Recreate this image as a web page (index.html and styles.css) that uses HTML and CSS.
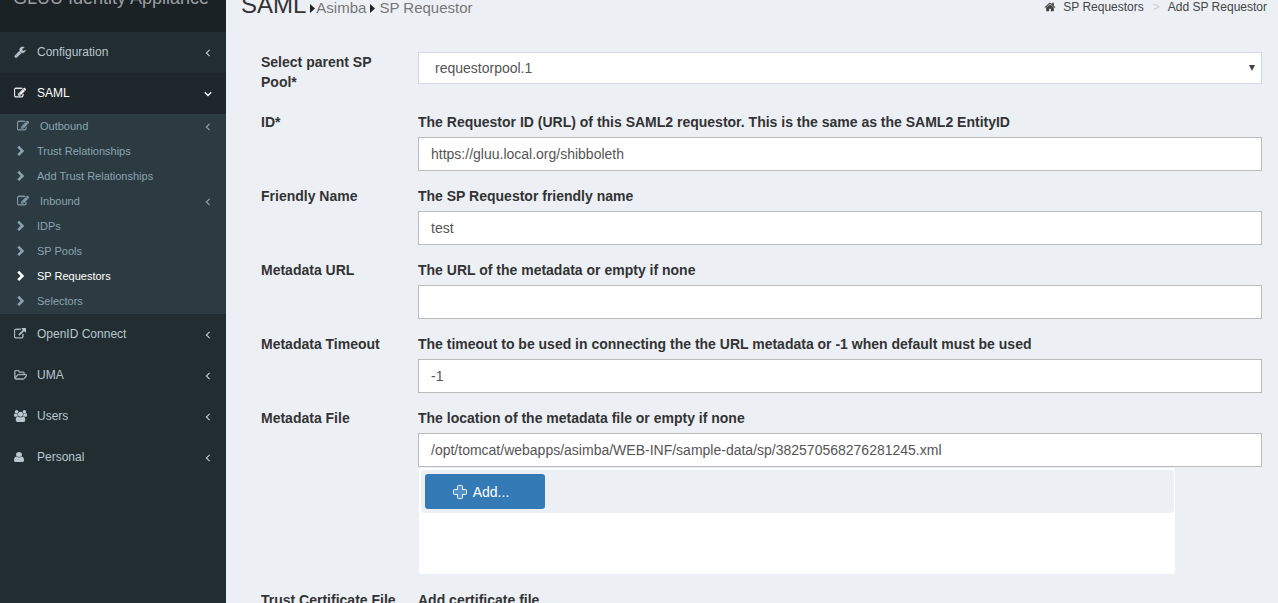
FILE: index.html
```html
<!DOCTYPE html>
<html lang="en">
<head>
<meta charset="utf-8">
<title>Add SP Requestor</title>
<link rel="stylesheet" href="styles.css">
</head>
<body>
<svg class="defs" width="0" height="0">
<symbol id="wrench" viewBox="0 0 1792 1792"><path d="M448 1472q0-26-19-45t-45-19-45 19-19 45 19 45 45 19 45-19 19-45zm644-420l-682 682q-37 37-90 37-52 0-91-37l-106-108q-38-36-38-90 0-53 38-91l681-681q39 98 114.500 173.500t173.500 114.500zm634-435q0 39-23 106-47 134-164.500 217.500t-258.500 83.500q-185 0-316.500-131.500t-131.500-316.500 131.500-316.500 316.500-131.500q58 0 121.500 16.500t107.500 46.500q16 11 16 28t-16 28l-293 169v224l193 107q5-3 79-48.500t135.500-81 70.500-35.500q15 0 23.500 10t8.500 25z"/></symbol>
<symbol id="edit" viewBox="0 0 1792 1792"><path d="M888 1184l116-116-152-152-116 116v56h96v96h56zm440-720q-16-16-33 1l-350 350q-17 17-1 33t33-1l350-350q17-17 1-33zm80 594v190q0 119-84.500 203.500t-203.500 84.500h-832q-119 0-203.500-84.500t-84.500-203.500v-832q0-119 84.500-203.500t203.500-84.500h832q63 0 117 25 15 7 18 23 3 17-9 29l-49 49q-14 14-32 8-23-6-45-6h-832q-66 0-113 47t-47 113v832q0 66 47 113t113 47h832q66 0 113-47t47-113v-126q0-13 9-22l64-64q15-15 35-7t20 29zm-96-738l288 288-672 672h-288v-288zm444 132l-92 92-288-288 92-92q28-28 68-28t68 28l152 152q28 28 28 68t-28 68z"/></symbol>
<symbol id="external" viewBox="0 0 1792 1792"><path d="M1408 928v320q0 119-84.500 203.500t-203.500 84.500h-832q-119 0-203.500-84.500t-84.500-203.500v-832q0-119 84.500-203.500t203.500-84.500h704q14 0 23 9t9 23v64q0 14-9 23t-23 9h-704q-66 0-113 47t-47 113v832q0 66 47 113t113 47h832q66 0 113-47t47-113v-320q0-14 9-23t23-9h64q14 0 23 9t9 23zm384-864v512q0 26-19 45t-45 19-45-19l-176-176-652 652q-10 10-23 10t-23-10l-114-114q-10-10-10-23t10-23l652-652-176-176q-19-19-19-45t19-45 45-19h512q26 0 45 19t19 45z"/></symbol>
<symbol id="folder" viewBox="0 128 1973 1500" preserveAspectRatio="none"><path d="M1845 931q0-35-53-35h-1088q-40 0-85.500 21.500t-71.500 52.500l-294 363q-18 24-18 40 0 35 53 35h1088q40 0 86-22t71-53l294-363q18-22 18-39zm-1141-163h768v-160q0-40-28-68t-68-28h-576q-40 0-68-28t-28-68v-64q0-40-28-68t-68-28h-320q-40 0-68 28t-28 68v853l256-315q44-53 116-87.500t140-34.500zm1269 163q0 62-46 120l-295 363q-43 53-116 87.500t-140 34.500h-1088q-92 0-158-66t-66-158v-960q0-92 66-158t158-66h320q92 0 158 66t66 158v32h544q92 0 158 66t66 158v160h192q54 0 99 24.500t67 70.500q15 32 15 68z"/></symbol>
<symbol id="users" viewBox="0 0 1920 1792" preserveAspectRatio="none"><path d="M593 896q-162 5-265 128h-134q-82 0-138-40.500t-56-118.500q0-353 124-353 6 0 43.500 21t97.500 42.500 119 21.500q67 0 133-23-5 37-5 66 0 159 81 256zm1071 637q0 120-73 189.500t-194 69.500h-874q-121 0-194-69.500t-73-189.500q0-53 3.500-103.500t14-109 26.500-108.500 43-97.500 62-81 85.500-53.500 111.500-20q10 0 43 21.500t73 48 107 48 135 21.500 135-21.500 107-48 73-48 43-21.500q61 0 111.500 20t85.500 53.500 62 81 43 97.500 26.500 108.500 14 109 3.500 103.500zm-1024-1277q0 106-75 181t-181 75-181-75-75-181 75-181 181-75 181 75 75 181zm704 384q0 159-112.500 271.500t-271.500 112.500-271.500-112.500-112.500-271.500 112.500-271.500 271.500-112.500 271.500 112.500 112.500 271.500zm576 225q0 78-56 118.500t-138 40.500h-134q-103-123-265-128 93-128 93-287 0-29-5-66 66 23 133 23 59 0 119-21.500t97.500-42.500 43.500-21q124 0 124 353zm-128-609q0 106-75 181t-181 75-181-75-75-181 75-181 181-75 181 75 75 181z"/></symbol>
<symbol id="user" viewBox="256 128 1280 1536" preserveAspectRatio="none"><path d="M1536 1399q0 109-62.500 187t-150.500 78h-854q-88 0-150.500-78t-62.500-187q0-85 8.500-160.500t31.500-152 58.500-131 94-89 134.500-34.500q131 128 313 128t313-128q76 0 134.500 34.500t94 89 58.500 131 31.500 152 8.500 160.500zm-256-887q0 159-112.500 271.500t-271.500 112.500-271.500-112.500-112.500-271.500 112.500-271.500 271.500-112.500 271.500 112.500 112.500 271.500z"/></symbol>
<symbol id="home" viewBox="0 0 1792 1792"><path d="M1472 992v480q0 26-19 45t-45 19h-384v-384h-256v384h-384q-26 0-45-19t-19-45v-480q0-1 .5-3t.5-3l575-474 575 474q1 2 1 6zm223-69l-62 74q-8 9-21 11h-3q-13 0-21-7l-692-577-692 577q-12 8-24 7-13-2-21-11l-62-74q-8-10-7-23.500t11-21.500l719-599q32-26 76-26t76 26l244 204v-195q0-14 9-23t23-9h192q14 0 23 9t9 23v408l219 182q10 8 11 21.500t-7 23.500z"/></symbol>
<symbol id="right" viewBox="0 0 12 12"><path d="M2.200 1.700 6.400 5.900 2.200 10.100" fill="none" stroke="currentColor" stroke-width="2.600"/></symbol>
<symbol id="angle" viewBox="0 0 6 8"><path d="M4.600 .8 1.400 4 4.600 7.200" fill="none" stroke="currentColor" stroke-width="1.200"/></symbol>
<symbol id="angle-down" viewBox="0 0 8 6"><path d="M.8 1.300 4 4.500 7.200 1.300" fill="none" stroke="currentColor" stroke-width="1.300"/></symbol>
</svg>
<div class="app">
<aside class="sidebar">
<div class="brand"><span>GLUU Identity Appliance</span></div>
<nav>
<a class="item"><svg class="icon outline"><use href="#wrench"/></svg><span>Configuration</span><svg class="angle"><use href="#angle"/></svg></a>
<a class="item open"><svg class="icon outline"><use href="#edit"/></svg><span>SAML</span><svg class="angle down"><use href="#angle-down"/></svg></a>
<div class="sub">
<a class="subitem group"><svg class="icon outline"><use href="#edit"/></svg><span>Outbound</span><svg class="angle"><use href="#angle"/></svg></a>
<a class="subitem"><svg class="icon"><use href="#right"/></svg><span>Trust Relationships</span></a>
<a class="subitem"><svg class="icon"><use href="#right"/></svg><span>Add Trust Relationships</span></a>
<a class="subitem group"><svg class="icon outline"><use href="#edit"/></svg><span>Inbound</span><svg class="angle"><use href="#angle"/></svg></a>
<a class="subitem"><svg class="icon"><use href="#right"/></svg><span>IDPs</span></a>
<a class="subitem"><svg class="icon"><use href="#right"/></svg><span>SP Pools</span></a>
<a class="subitem active"><svg class="icon"><use href="#right"/></svg><span>SP Requestors</span></a>
<a class="subitem"><svg class="icon"><use href="#right"/></svg><span>Selectors</span></a>
</div>
<a class="item"><svg class="icon outline"><use href="#external"/></svg><span>OpenID Connect</span><svg class="angle"><use href="#angle"/></svg></a>
<a class="item"><svg class="icon folder outline"><use href="#folder"/></svg><span>UMA</span><svg class="angle"><use href="#angle"/></svg></a>
<a class="item"><svg class="icon wide"><use href="#users"/></svg><span>Users</span><svg class="angle"><use href="#angle"/></svg></a>
<a class="item"><svg class="icon person"><use href="#user"/></svg><span>Personal</span><svg class="angle"><use href="#angle"/></svg></a>
</nav>
</aside>
<main class="content">
<header class="heading">
<h1>SAML</h1>
<svg class="caret" viewBox="0 0 5 9"><path d="M0 0 5 4.500 0 9z"/></svg>
<span class="small">Asimba</span>
<svg class="caret second" viewBox="0 0 5 9"><path d="M0 0 5 4.500 0 9z"/></svg>
<span class="small">SP Requestor</span>
<div class="crumbs"><svg class="home"><use href="#home"/></svg><span>SP Requestors</span><i>&gt;</i><span>Add SP Requestor</span></div>
</header>
<form class="form">
<div class="row pool"><label>Select parent SP Pool*</label><div class="field"><div class="select"><span>requestorpool.1</span><svg class="arrow" viewBox="0 0 6 6"><path d="M0 0H6L3 6z"/></svg></div></div></div>
<div class="row"><label>ID*</label><div class="field"><b>The Requestor ID (URL) of this SAML2 requestor. This is the same as the SAML2 EntityID</b><input value="https://gluu.local.org/shibboleth"></div></div>
<div class="row"><label>Friendly Name</label><div class="field"><b>The SP Requestor friendly name</b><input value="test"></div></div>
<div class="row"><label>Metadata URL</label><div class="field"><b>The URL of the metadata or empty if none</b><input value=""></div></div>
<div class="row"><label>Metadata Timeout</label><div class="field"><b>The timeout to be used in connecting the the URL metadata or -1 when default must be used</b><input value="-1"></div></div>
<div class="row file"><label>Metadata File</label><div class="field"><b>The location of the metadata file or empty if none</b><input value="/opt/tomcat/webapps/asimba/WEB-INF/sample-data/sp/382570568276281245.xml">
<div class="upload"><div class="toolbar"><button type="button"><svg class="plus" viewBox="0 0 14 14"><path d="M4.500 1.500q0-1 1-1h3q1 0 1 1v3h3q1 0 1 1v3q0 1-1 1h-3v3q0 1-1 1h-3q-1 0-1-1v-3h-3q-1 0-1-1v-3q0-1 1-1h3z"/></svg><span>Add...</span></button></div></div></div></div>
<div class="row"><label>Trust Certificate File</label><div class="field"><b>Add certificate file</b></div></div>
</form>
</main>
</div>
</body>
</html>
```
FILE: styles.css
```css
* { box-sizing: border-box; }
body { margin: 0; font: 14px/20px "Liberation Sans", Arial, sans-serif; color: #333; overflow: hidden; }
.defs { display: none; }
svg { display: block; flex: none; fill: currentColor; }
.app { display: flex; height: 603px; overflow: hidden; background: #ecf0f5; }

.sidebar { width: 226px; flex: none; background: #222d32; color: #b8c7ce; }
.brand { height: 32px; background: #1a2226; color: #9a9fa2; font-size: 18px; padding-left: 13px; white-space: nowrap; }
.brand span { display: block; margin-top: -12px; float: left; }
.item { display: flex; align-items: center; height: 41px; padding: 0 14px 2px; font-size: 12px; }
.item.open { background: #1e282c; color: #fff; }
.icon { width: 12px; height: 12px; margin-right: 11px; }
.icon.outline { stroke: currentColor; stroke-width: 50; }
.icon.wide { width: 13px; margin-right: 10px; }
.icon.folder { width: 13px; height: 10px; margin-right: 10px; }
.icon.person { width: 10px; height: 10px; margin-right: 13px; }
.angle { width: 6px; height: 8px; margin: 2px 1px 0 auto; }
.angle.down { width: 8px; height: 6px; margin-right: 0; }
.sub { background: #2c3b41; color: #8aa4af; }
.subitem { display: flex; align-items: center; height: 25px; padding: 0 14px 2px 16px; font-size: 11px; }
.subitem .icon { margin-right: 9px; margin-top: 1px; }
.subitem.group .icon { margin-left: 1px; margin-right: 11px; width: 12px; height: 12px; }
.subitem.active { color: #fff; }

.content { flex: 1; min-width: 0; }
.heading { display: flex; align-items: center; height: 32px; margin-top: -8px; padding: 0 11px 0 15px; }
h1 { margin: -6px 4px 0 0; font-size: 24px; font-weight: 400; line-height: 26px; color: #333; }
.small { font-size: 15px; color: #777; }
.caret { width: 5px; height: 9px; color: #222; margin-right: 1px; }
.caret.second { margin: 0 4px; }
.crumbs { display: flex; align-items: center; margin-left: auto; font-size: 12px; color: #444; margin-top: -2px; }
.home { width: 12px; height: 12px; margin-right: 7px; }
.crumbs i { font-style: normal; color: #ccc; margin: 0 8px 0 9px; }

.form { padding: 28px 16px 0 35px; }
.row { display: flex; height: 74px; }
.row label { width: 157px; flex: none; padding-right: 20px; font-weight: 700; white-space: nowrap; }
.pool label { white-space: normal; }
.row.pool { height: 60px; }
.field { flex: 1; }
.field b { display: block; height: 25px; white-space: nowrap; }
.field input { display: block; width: 100%; height: 34px; border: 1px solid #bbb; background: #fff; padding: 0 12px; font: inherit; color: #555; outline: 0; }
.select { display: flex; align-items: center; justify-content: space-between; height: 32px; border: 1px solid #d2d6de; background: #fff; padding: 0 6px 0 16px; color: #555; }
.arrow { width: 6px; height: 6px; color: #444; }
.row.file { height: 182px; }
.upload { width: 756px; height: 106px; margin: 1px 0 0 1px; padding: 2px 1px 0 2px; background: #fff; border-radius: 3px; }
.toolbar { height: 43px; padding: 4px; background: #ecf0f5; border-radius: 4px; }
button { display: flex; align-items: center; justify-content: center; width: 120px; height: 35px; padding: 0 8px 0 0; border: 0; border-radius: 3px; background: #337ab7; color: #fff; font: inherit; }
.plus { width: 14px; height: 14px; margin-right: 6px; fill: #4f91c8; stroke: #fff; }
```
